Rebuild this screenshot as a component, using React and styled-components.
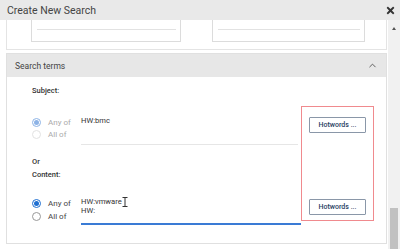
import React from 'react';
import styled, {createGlobalStyle} from "styled-components";
import {FaTimes} from "react-icons/fa";
import {ChevronUp} from "lucide-react";

const GlobalStyle = createGlobalStyle`
  html, body {
    margin: 0;
    padding: 0;
    background: #fff;
    font-family: Roboto, "Liberation Sans", sans-serif;
  }
`

const Dialog = styled.div`
  width: 400px;
  height: 249px;
  display: flex;
  flex-direction: column;
  overflow: hidden;
  background: #fff;
`

const TitleBar = styled.div`
  height: 20px;
  flex-shrink: 0;
  display: flex;
  align-items: center;
  justify-content: space-between;
  padding: 0 4px 0 7px;
  background: #e9e9e9;
  color: #444;
  font-size: 10.5px;
`

const CloseButton = styled.span`
  display: flex;
  color: #333;
  font-size: 11px;
`

const Body = styled.div`
  flex: 1;
  display: flex;
  min-height: 0;
`

const Content = styled.div`
  flex: 1;
  padding: 0 1px 0 6px;
  display: flex;
  flex-direction: column;
`

const TopPanel = styled.div`
  height: 30px;
  border: 1px solid #e4e4e4;
  border-top: none;
  display: flex;
  gap: 31px;
  padding-left: 24px;
  box-sizing: border-box;
`

const FieldBox = styled.div`
  width: ${p => p.w}px;
  height: 22px;
  box-sizing: border-box;
  border: 1px solid #dcdcdc;
  border-top: none;
  padding: 9px 4px 0 5px;
`

const FieldLine = styled.div`
  border-top: 1px solid #e2e2e2;
`

const Section = styled.div`
  margin-top: 3px;
  border: 1px solid #e0e0e0;
  height: 191px;
  box-sizing: border-box;
  display: flex;
  flex-direction: column;
`

const SectionHeader = styled.div`
  height: 23px;
  flex-shrink: 0;
  display: flex;
  align-items: center;
  justify-content: space-between;
  padding: 0 8px 0 8px;
  background: #e7e7e7;
  color: #444;
  font-size: 8.5px;
`

const SectionBody = styled.div`
  flex: 1;
  display: flex;
  position: relative;
`

const Terms = styled.div`
  flex: 1;
  padding: 7px 0 0 25px;
  display: flex;
  flex-direction: column;
`

const Label = styled.div`
  font-size: 7.5px;
  line-height: 13px;
  font-weight: 500;
  color: #333;
`

const TermRow = styled.div`
  display: flex;
  align-items: flex-start;
  margin-top: ${p => p.top}px;
`

const RadioGroup = styled.div`
  width: 49px;
  margin-top: ${p => p.top}px;
  display: flex;
  flex-direction: column;
`

const RadioOption = styled.label`
  display: flex;
  align-items: center;
  gap: 7px;
  height: ${p => p.h}px;
  font-size: 8px;
  color: ${p => p.disabled ? "#aaa" : "#444"};
`

const RadioDot = styled.span`
  width: 9px;
  height: 9px;
  box-sizing: border-box;
  border-radius: 50%;
  border: 1px solid ${p => p.checked ? (p.disabled ? "#8db3e6" : "#1f6fd1") : (p.disabled ? "#e2e2e2" : "#999")};
  background: #fff;
  display: flex;
  align-items: center;
  justify-content: center;
  &::after {
    content: "";
    display: ${p => p.checked ? "block" : "none"};
    width: 5px;
    height: 5px;
    border-radius: 50%;
    background: ${p => p.disabled ? "#8db3e6" : "#1f6fd1"};
  }
`

const TermInput = styled.div`
  flex: 1;
  height: ${p => p.h}px;
  font-size: 7.6px;
  line-height: 9px;
  color: #333;
  border-bottom: ${p => p.focused ? "2px solid #3a7bd5" : "1px solid #e6e6e6"};
  margin-right: ${p => p.focused ? 0 : 3}px;
  padding-top: ${p => p.pt}px;
  box-sizing: border-box;
  position: relative;
`

const Cursor = styled.svg`
  position: absolute;
  left: 41px;
  top: 1px;
`

const HotwordsColumn = styled.div`
  width: 73px;
  margin: 29px 12px 0 0;
  height: 115px;
  box-sizing: border-box;
  border: 1px solid #f08a8e;
  padding: 10px 7px 5px 7px;
  display: flex;
  flex-direction: column;
  justify-content: space-between;
  align-items: center;
`

const HotwordsButton = styled.button`
  width: 57px;
  height: 16px;
  padding: 0;
  border: 1px solid #8a97a8;
  border-radius: 1px;
  background: #fff;
  color: #27405f;
  font-family: Roboto, "Liberation Sans", sans-serif;
  font-size: 7px;
  font-weight: 500;
`

const Scrollbar = styled.div`
  width: 12px;
  flex-shrink: 0;
  background: #f1f1f1;
  display: flex;
  flex-direction: column;
  justify-content: space-between;
  align-items: center;
`

const ScrollArrow = styled.div`
  margin-top: 7px;
  width: 0;
  height: 0;
  border-left: 2.5px solid transparent;
  border-right: 2.5px solid transparent;
  border-bottom: 3px solid #555;
`

const ScrollThumb = styled.div`
  width: 8px;
  height: 41px;
  background: #c1c1c1;
`

function Radios({top, h, disabled, value}) {
    return (
        <RadioGroup top={top}>
            <RadioOption h={h} disabled={disabled}>
                <RadioDot checked={value === "any"} disabled={disabled}/>
                Any of
            </RadioOption>
            <RadioOption h={h} disabled={disabled}>
                <RadioDot checked={value === "all"} disabled={disabled}/>
                All of
            </RadioOption>
        </RadioGroup>
    );
}

function App() {
    return (
        <Dialog>
            <GlobalStyle/>
            <TitleBar>
                Create New Search
                <CloseButton><FaTimes/></CloseButton>
            </TitleBar>
            <Body>
                <Content>
                    <TopPanel>
                        <FieldBox w={150}><FieldLine/></FieldBox>
                        <FieldBox w={153}><FieldLine/></FieldBox>
                    </TopPanel>
                    <Section>
                        <SectionHeader>
                            Search terms
                            <ChevronUp size={11} strokeWidth={1.8} color="#444"/>
                        </SectionHeader>
                        <SectionBody>
                            <Terms>
                                <Label>Subject:</Label>
                                <TermRow top={17}>
                                    <Radios top={2} h={12} disabled value="any"/>
                                    <TermInput h={31} pt={2}>HW:bmc</TermInput>
                                </TermRow>
                                <Label style={{marginTop: 10}}>Or<br/>Content:</Label>
                                <TermRow top={15}>
                                    <Radios top={1} h={13} value="any"/>
                                    <TermInput h={29} pt={1} focused>
                                        HW:vmware<br/>HW:
                                        <Cursor width="6" height="10" viewBox="0 0 6 10">
                                            <path d="M0.5 0.5h2.5M3 0.5h2.5M3 0.5v9M0.5 9.5h2.5M3 9.5h2.5" stroke="#333" strokeWidth="1" fill="none"/>
                                        </Cursor>
                                    </TermInput>
                                </TermRow>
                            </Terms>
                            <HotwordsColumn>
                                <HotwordsButton>Hotwords ...</HotwordsButton>
                                <HotwordsButton>Hotwords ...</HotwordsButton>
                            </HotwordsColumn>
                        </SectionBody>
                    </Section>
                </Content>
                <Scrollbar>
                    <ScrollArrow/>
                    <ScrollThumb/>
                </Scrollbar>
            </Body>
        </Dialog>
    );
}

export default App;
